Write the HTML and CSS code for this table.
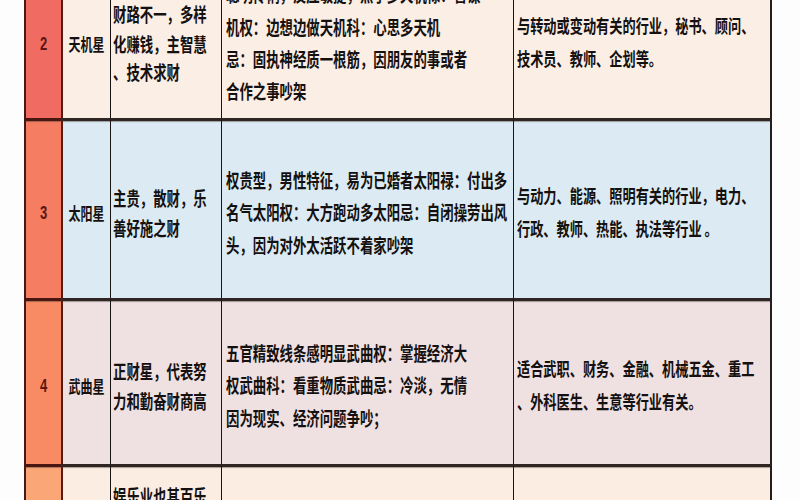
FILE: index.html
```html
<!DOCTYPE html>
<html lang="zh-CN">
<head>
<meta charset="utf-8">
<title>星曜表</title>
<link rel="stylesheet" href="styles.css">
</head>
<body>
<div class="page">
  <div class="table">
    <div class="row r2">
      <div class="c num"><span class="n">2</span></div>
      <div class="c star"><span class="t">天机星</span></div>
      <div class="c col3"><p class="t">财路不一，多样<br>化赚钱，主智慧<br>、技术求财</p></div>
      <div class="c col4"><p class="t">聪明伶俐，反应敏捷，点子多天机禄：善谋<br>机权：边想边做天机科：心思多天机<br>忌：固执神经质一根筋，因朋友的事或者<br>合作之事吵架</p></div>
      <div class="c col5"><p class="t">与转动或变动有关的行业，秘书、顾问、<br>技术员、教师、企划等。</p></div>
    </div>
    <div class="row r3">
      <div class="c num"><span class="n">3</span></div>
      <div class="c star"><span class="t">太阳星</span></div>
      <div class="c col3"><p class="t">主贵，散财，乐<br>善好施之财</p></div>
      <div class="c col4"><p class="t">权贵型，男性特征，易为已婚者太阳禄：付出多<br>名气太阳权：大方跑动多太阳忌：自闭操劳出风<br>头，因为对外太活跃不着家吵架</p></div>
      <div class="c col5"><p class="t">与动力、能源、照明有关的行业，电力、<br>行政、教师、热能、执法等行业 。</p></div>
    </div>
    <div class="row r4">
      <div class="c num"><span class="n">4</span></div>
      <div class="c star"><span class="t">武曲星</span></div>
      <div class="c col3"><p class="t">正财星，代表努<br>力和勤奋财商高</p></div>
      <div class="c col4"><p class="t">五官精致线条感明显武曲权：掌握经济大<br>权武曲科：看重物质武曲忌：冷淡，无情<br>因为现实、经济问题争吵；</p></div>
      <div class="c col5"><p class="t">适合武职、财务、金融、机械五金、重工<br>、外科医生、生意等行业有关。</p></div>
    </div>
    <div class="row r5">
      <div class="c num"><span class="n">5</span></div>
      <div class="c star"><span class="t">贪狼星</span></div>
      <div class="c col3"><p class="t">娱乐业也其百乐<br>桃花财，偏财运<br>佳，交际应酬<br>得财</p></div>
      <div class="c col4"><p class="t">桃花旺，多才多艺贪狼禄：人缘好<br>贪狼权：能言善道贪狼忌：欲望多<br>因为应酬太多吵架</p></div>
      <div class="c col5"><p class="t">娱乐、公关、餐饮、美容等行业。<br>交际应酬有关的行业。</p></div>
    </div>
  </div>
</div>
</body>
</html>
```

FILE: styles.css
```css
html, body {
  margin: 0;
  padding: 0;
  background: #ffffff;
}

.page {
  width: 800px;
  height: 500px;
  overflow: hidden;
  background: #fdfdfd;
}

.table {
  margin-top: -38px;
  margin-left: 24px;
  width: 748px;
  font-family: "Noto Sans CJK SC", "Noto Sans", sans-serif;
  color: #141110;
}

.row {
  display: grid;
  grid-template-columns: 37px 49px 111px 292px 259px;
}

.r2 { height: 156px; background: #fbeee5; }
.r3 { height: 180px; background: #dcebf3; }
.r4 { height: 166px; background: #efe0e2; }
.r5 { height: 170px; background: #fbede2; }

.c {
  box-sizing: border-box;
  display: flex;
  align-items: center;
  border-left: 1.5px solid #1a1513;
  border-top: 3px solid #2f2623;
  box-shadow: inset 0 2px 1px -1px rgba(70, 60, 55, 0.45);
}

.r2 .c {
  border-top: 0;
  box-shadow: none;
}

.c:last-child {
  border-right: 2px solid #231d1b;
}

.num {
  justify-content: center;
  border-left: 2px solid #4a1814;
  border-top-color: #4a1612;
}

.r2 .num { background: #f06b62; }
.r3 .num { background: #f57d62; }
.r4 .num { background: #f88b63; }
.r5 .num { background: #faa677; }

.star {
  justify-content: center;
  border-left: 2px solid #5a1a14;
}

.n {
  display: inline-block;
  font-family: "Liberation Sans", Arial, sans-serif;
  font-weight: 700;
  font-size: 13px;
  color: #5c150f;
  transform: scaleY(1.4);
  padding-top: 4px;
}

.t {
  display: inline-block;
  margin: 0;
  white-space: nowrap;
  font-weight: 700;
  transform: scaleY(1.42);
}

.star .t {
  font-size: 12px;
  padding-top: 4px;
}

.col3 {
  padding-left: 2px;
  padding-top: 6px;
}

.col3 .t {
  font-size: 13.4px;
  line-height: 20.5px;
}

.col4 {
  padding-left: 4px;
  padding-top: 6px;
}

.col4 .t {
  font-size: 13.4px;
  line-height: 22.8px;
}

.col5 {
  padding-left: 3px;
  padding-top: 6px;
}

.col5 .t {
  font-size: 13.2px;
  line-height: 22.8px;
}

.r5 .c {
  align-items: flex-start;
  padding-top: 32px;
}

.r5 .num, .r5 .star {
  align-items: center;
  padding-top: 0;
}

.r5 .col4, .r5 .col5 {
  padding-top: 56px;
}
```
